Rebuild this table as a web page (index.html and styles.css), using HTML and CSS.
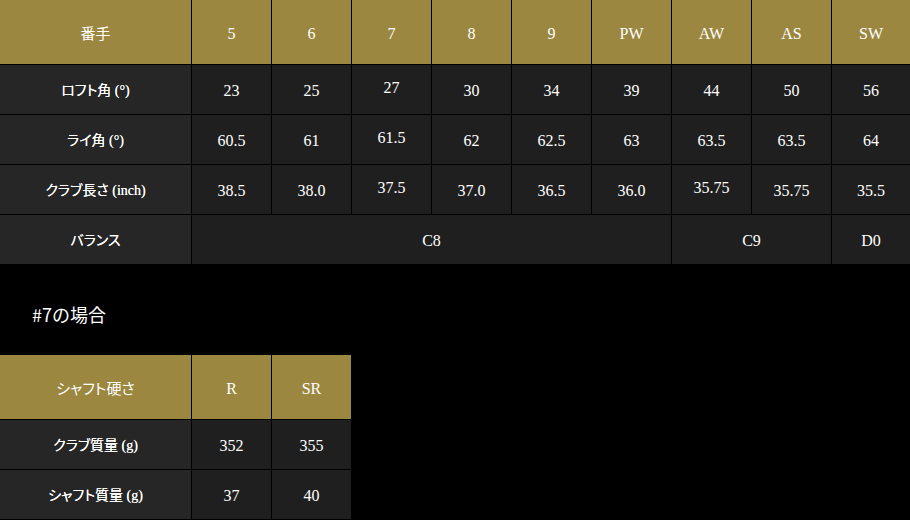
FILE: index.html
```html
<!DOCTYPE html>
<html lang="ja">
<head>
<meta charset="utf-8">
<link rel="stylesheet" href="styles.css">
</head>
<body>
<div class="spec spec-main">
  <div class="cell head label">番手</div>
  <div class="cell head">5</div>
  <div class="cell head">6</div>
  <div class="cell head">7</div>
  <div class="cell head">8</div>
  <div class="cell head">9</div>
  <div class="cell head">PW</div>
  <div class="cell head">AW</div>
  <div class="cell head">AS</div>
  <div class="cell head">SW</div>

  <div class="cell label">ロフト角 (°)</div>
  <div class="cell">23</div>
  <div class="cell">25</div>
  <div class="cell up">27</div>
  <div class="cell">30</div>
  <div class="cell">34</div>
  <div class="cell">39</div>
  <div class="cell">44</div>
  <div class="cell">50</div>
  <div class="cell">56</div>

  <div class="cell label">ライ角 (°)</div>
  <div class="cell">60.5</div>
  <div class="cell">61</div>
  <div class="cell up">61.5</div>
  <div class="cell">62</div>
  <div class="cell">62.5</div>
  <div class="cell">63</div>
  <div class="cell">63.5</div>
  <div class="cell">63.5</div>
  <div class="cell">64</div>

  <div class="cell label">クラブ長さ (inch)</div>
  <div class="cell">38.5</div>
  <div class="cell">38.0</div>
  <div class="cell up">37.5</div>
  <div class="cell">37.0</div>
  <div class="cell">36.5</div>
  <div class="cell">36.0</div>
  <div class="cell up">35.75</div>
  <div class="cell">35.75</div>
  <div class="cell">35.5</div>

  <div class="cell label">バランス</div>
  <div class="cell span6">C8</div>
  <div class="cell span2">C9</div>
  <div class="cell">D0</div>
</div>

<h2 class="section-title">#7の場合</h2>

<div class="spec spec-shaft">
  <div class="cell head label">シャフト硬さ</div>
  <div class="cell head">R</div>
  <div class="cell head">SR</div>

  <div class="cell label">クラブ質量 (g)</div>
  <div class="cell">352</div>
  <div class="cell">355</div>

  <div class="cell label">シャフト質量 (g)</div>
  <div class="cell">37</div>
  <div class="cell">40</div>
</div>
</body>
</html>
```

FILE: styles.css
```css
html, body {
  margin: 0;
  padding: 0;
  background: #000;
}

body {
  width: 910px;
  height: 520px;
  overflow: hidden;
  color: #fff;
  font-family: "Liberation Serif", "Noto Sans CJK JP", serif;
}

.spec {
  display: grid;
  gap: 1px;
  background: #000;
}

.spec-main {
  width: 910px;
  grid-template-columns: 191px repeat(8, 79px) 78px;
  grid-template-rows: 64px repeat(4, 49px);
}

.spec-shaft {
  width: 351px;
  grid-template-columns: 191px 79px 79px;
  grid-template-rows: 64px 49px 49px;
}

.cell {
  display: flex;
  align-items: center;
  justify-content: center;
  background: #1f1f1f;
  font-size: 16px;
  line-height: 1;
  padding-top: 3px;
  box-sizing: border-box;
  white-space: pre;
}

.cell.up {
  padding-top: 0;
  padding-bottom: 3px;
}

.cell.label {
  background: #262626;
  font-size: 14px;
  font-weight: normal;
  font-feature-settings: "palt";
  text-shadow: 0 0 0.3px #fff;
}

.cell.head {
  background: #9b873f;
  font-size: 16px;
  font-weight: normal;
  padding-top: 4px;
}

.cell.head.label {
  font-size: 15px;
  font-weight: normal;
  text-shadow: none;
}

.span6 {
  grid-column: span 6;
}

.span2 {
  grid-column: span 2;
}

.section-title {
  margin: 0;
  padding: 38px 0 29px 32px;
  font-family: "Noto Sans CJK JP", "Liberation Sans", sans-serif;
  font-size: 18px;
  font-weight: normal;
  line-height: 24px;
  color: #fff;
}
```
